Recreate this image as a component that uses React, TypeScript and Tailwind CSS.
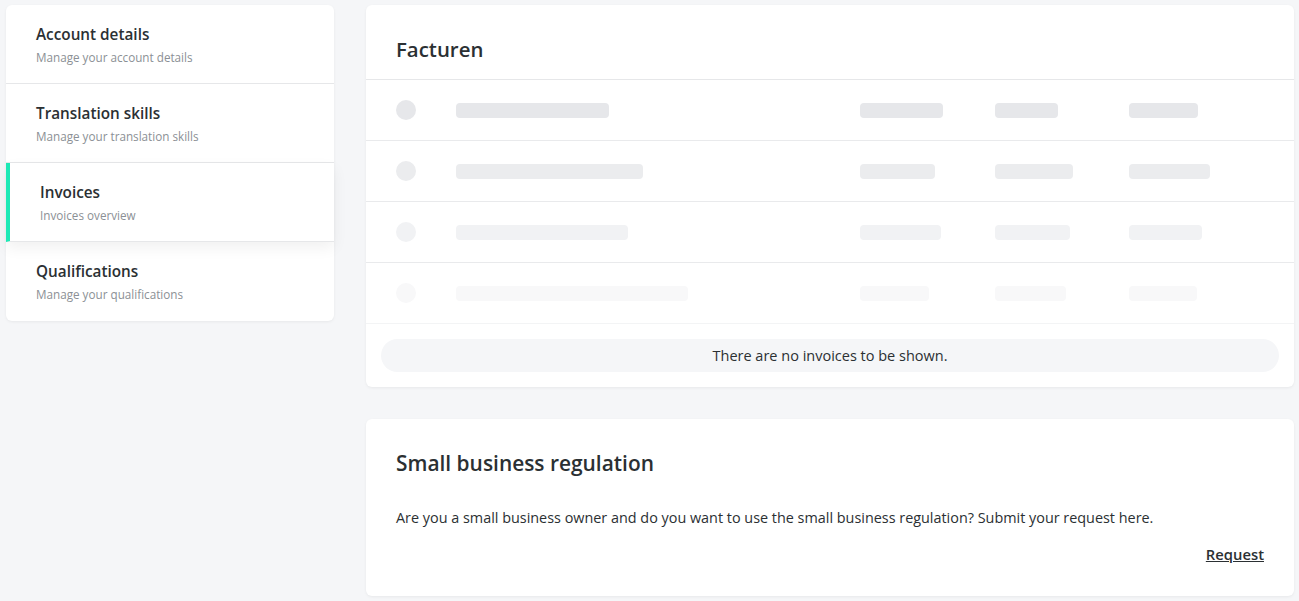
import React from "react";

const nav = [
  { t: "Account details", s: "Manage your account details" },
  { t: "Translation skills", s: "Manage your translation skills" },
  { t: "Invoices", s: "Invoices overview", active: true },
  { t: "Qualifications", s: "Manage your qualifications" },
];

const rows = [
  { w: [153, 83, 63, 69], c: "bg-[#e6e7ea]" },
  { w: [187, 75, 78, 81], c: "bg-[#ebecee]" },
  { w: [172, 81, 75, 73], c: "bg-[#f1f2f4]" },
  { w: [232, 69, 71, 68], c: "bg-[#f8f8f9]" },
];

export default function App() {
  return (
    <div
      className="min-h-[601px] bg-[#f5f6f8] pl-[6px] pr-[5px] pt-[5px] pb-[5px] text-[#2b3033]"
      style={{ fontFamily: "'Open Sans', 'Noto Sans', sans-serif" }}
    >
      <div className="grid grid-cols-[328px_1fr] gap-[32px] items-start">
        <div className="bg-white rounded-[6px] shadow-[0_1px_3px_rgba(0,0,0,0.06)]">
          {nav.map((n, i) => (
            <div
              key={n.t}
              className={`h-[79px] flex flex-col pt-[19px] ${i < nav.length - 1 ? "border-b border-[#e6e7e9]" : ""} ${
                n.active
                  ? "relative bg-white border-l-[4px] border-l-[#1de9b6] pl-[30px] shadow-[0_6px_14px_rgba(0,0,0,0.06)] z-10"
                  : "pl-[30px]"
              } ${i === nav.length - 1 ? "h-[78px] rounded-b-[6px]" : ""} ${i === 0 ? "rounded-t-[6px]" : ""}`}
            >
              <div className="text-[15.3px] font-semibold leading-[20px] text-[#2b3033]">{n.t}</div>
              <div className="mt-[5px] text-[11.7px] leading-[16px] text-[#8b9095]">{n.s}</div>
            </div>
          ))}
        </div>

        <div className="flex flex-col gap-[32px]">
          <div className="bg-white rounded-[6px] shadow-[0_1px_3px_rgba(0,0,0,0.06)]">
            <div className="h-[75px] border-b border-[#e6e7e9] pl-[30px] pt-[30px]">
              <h2 className="text-[20.4px] font-semibold leading-[28px] text-[#2b3033]">Facturen</h2>
            </div>
            {rows.map((r, i) => (
              <div
                key={i}
                className={`h-[61px] flex items-center pl-[30px] border-b ${i < 3 ? "border-[#e9eaec]" : "border-[#f3f4f5]"}`}
              >
                <div className={`w-[20px] h-[20px] rounded-full shrink-0 ${r.c}`} />
                <div className="w-[444px] pl-[40px] shrink-0">
                  <div className={`h-[15px] rounded-[4px] ${r.c}`} style={{ width: r.w[0] }} />
                </div>
                <div className="w-[135px] shrink-0">
                  <div className={`h-[15px] rounded-[4px] ${r.c}`} style={{ width: r.w[1] }} />
                </div>
                <div className="w-[134px] shrink-0">
                  <div className={`h-[15px] rounded-[4px] ${r.c}`} style={{ width: r.w[2] }} />
                </div>
                <div>
                  <div className={`h-[15px] rounded-[4px] ${r.c}`} style={{ width: r.w[3] }} />
                </div>
              </div>
            ))}
            <div className="px-[15px] pt-[15px] pb-[15px]">
              <div className="h-[33px] rounded-full bg-[#f5f6f8] flex items-center justify-center text-[14.5px] text-[#2b3033]">
                There are no invoices to be shown.
              </div>
            </div>
          </div>

          <div className="bg-white rounded-[6px] shadow-[0_1px_3px_rgba(0,0,0,0.06)] h-[177px] px-[30px] pt-[30px]">
            <h2 className="text-[20.9px] font-semibold leading-[28px] text-[#2b3033]">Small business regulation</h2>
            <p className="mt-[31px] text-[14.4px] leading-[20px] text-[#2b3033]">
              Are you a small business owner and do you want to use the small business regulation? Submit your request here.
            </p>
            <div className="mt-[16px] flex justify-end">
              <a className="text-[14.8px] font-semibold underline leading-[20px] text-[#2b3033]">Request</a>
            </div>
          </div>
        </div>
      </div>
    </div>
  );
}
